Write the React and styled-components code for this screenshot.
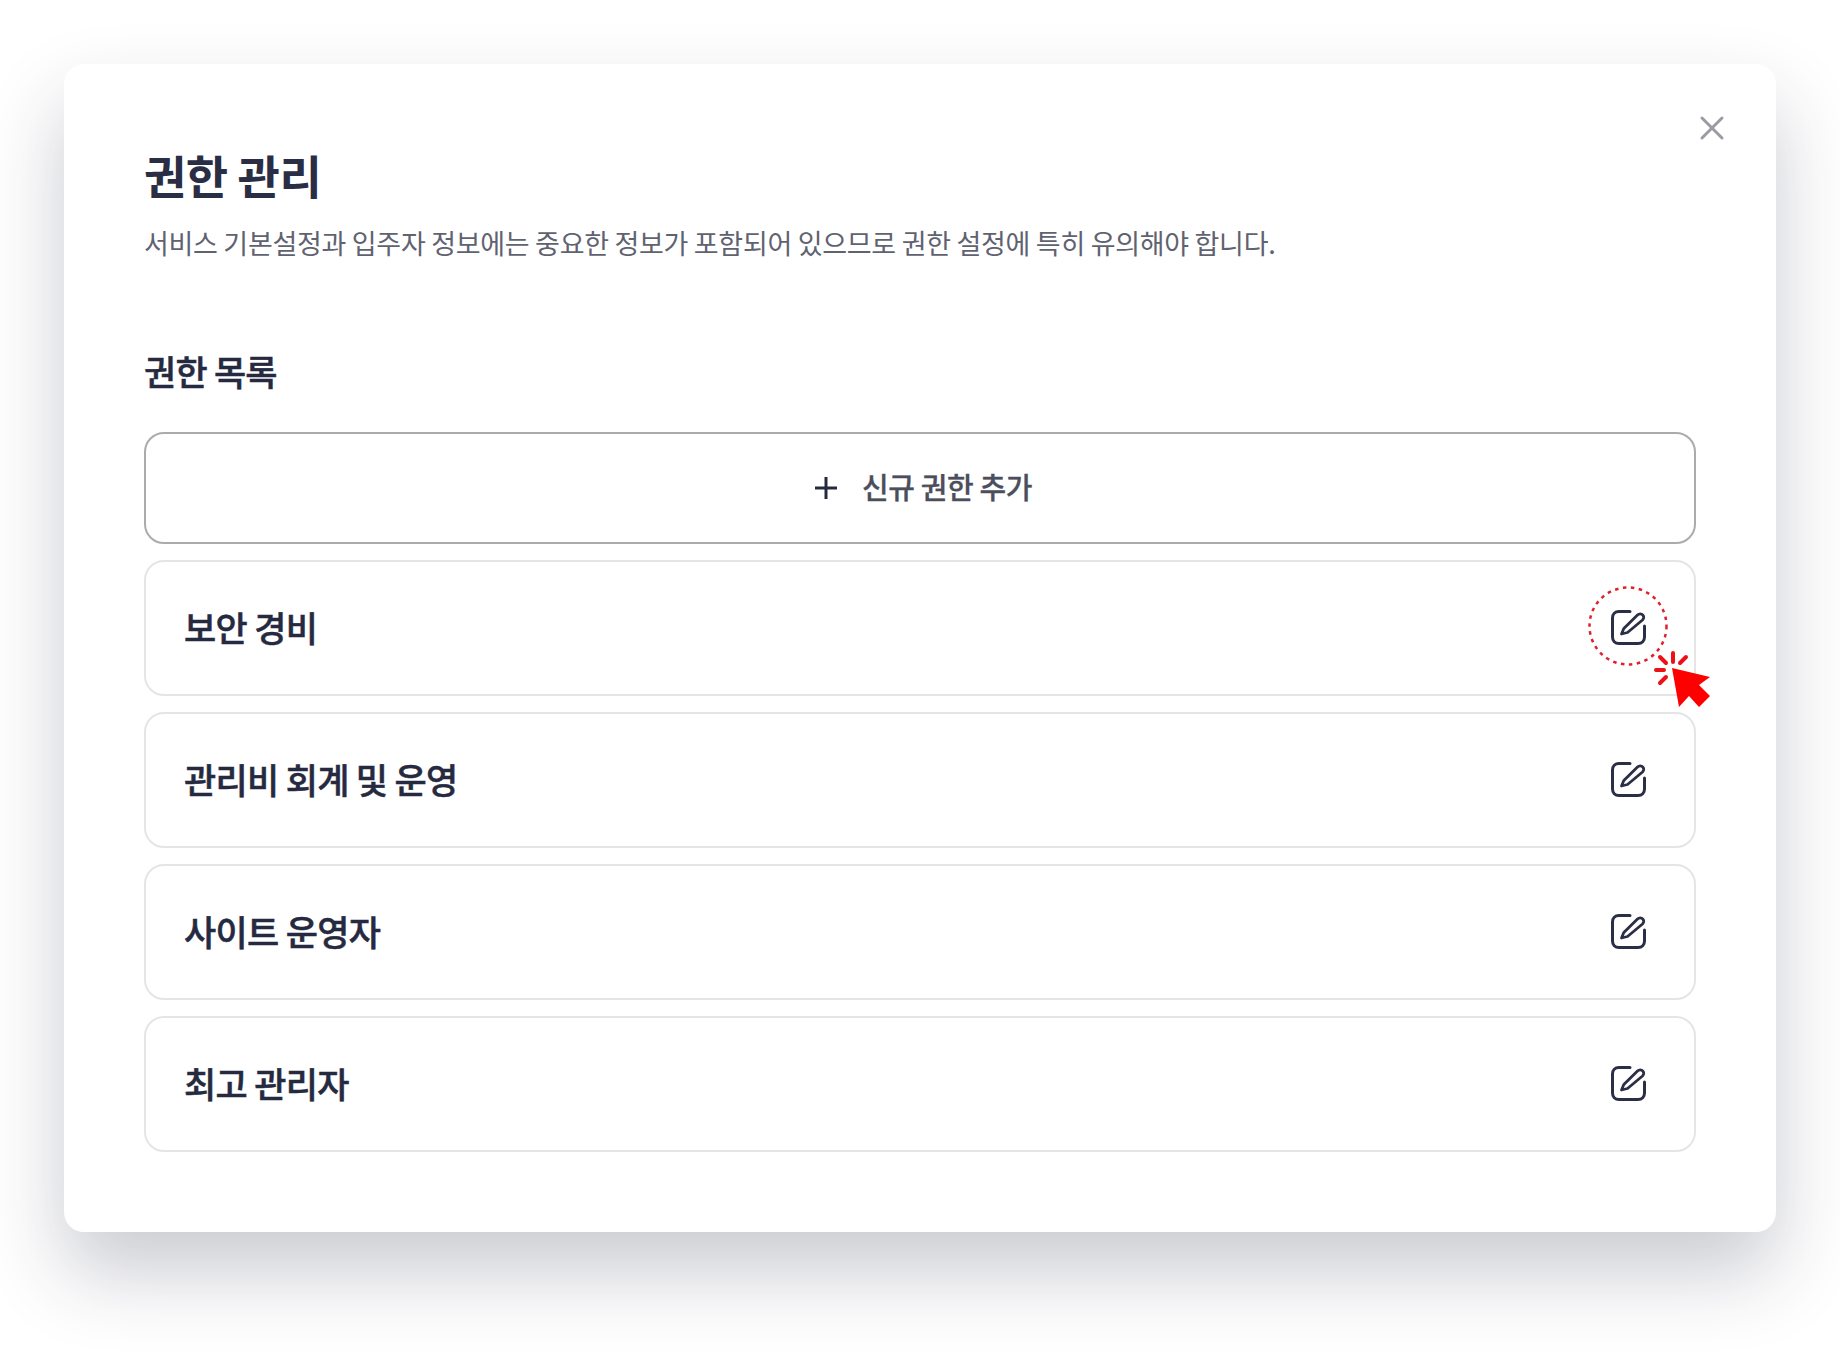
import React from "react";
import styled, { createGlobalStyle } from "styled-components";

const roles = ["보안 경비", "관리비 회계 및 운영", "사이트 운영자", "최고 관리자"];

const GlobalStyle = createGlobalStyle`
  html, body {
    margin: 0;
    padding: 0;
    background: #fff;
    font-family: "Noto Sans CJK KR", "Noto Sans", sans-serif;
  }
  * { box-sizing: border-box; }
`;

const Page = styled.div`
  width: 1840px;
  height: 1368px;
  padding: 64px;
  overflow: hidden;
`;

const Modal = styled.section`
  position: relative;
  width: 1712px;
  height: 1168px;
  padding: 78px 80px 0;
  background: #fff;
  border-radius: 20px;
  box-shadow: 0 40px 80px rgba(35, 38, 62, 0.24);
`;

const CloseButton = styled.button`
  position: absolute;
  top: 48px;
  right: 48px;
  width: 32px;
  height: 32px;
  padding: 0;
  border: 0;
  background: none;
  color: #9a9ca3;
  svg { display: block; }
`;

const Title = styled.h1`
  margin: 0;
  height: 64px;
  font-size: 46px;
  line-height: 64px;
  font-weight: 700;
  letter-spacing: -0.5px;
  color: #2a2e45;
`;

const Description = styled.p`
  margin: 17px 0 0;
  height: 40px;
  font-size: 27px;
  line-height: 40px;
  font-weight: 400;
  letter-spacing: -0.3px;
  color: #5f6270;
`;

const SectionTitle = styled.h2`
  margin: 84px 0 0;
  height: 48px;
  font-size: 35px;
  line-height: 48px;
  font-weight: 500;
  -webkit-text-stroke: 0.5px #262a41;
  letter-spacing: -0.8px;
  color: #262a41;
`;

const List = styled.div`
  display: flex;
  flex-direction: column;
  gap: 16px;
  margin-top: 37px;
`;

const AddButton = styled.button`
  display: flex;
  align-items: center;
  justify-content: center;
  gap: 22px;
  width: 100%;
  height: 112px;
  border: 2px solid #ababab;
  border-radius: 20px;
  background: #fff;
  font-family: inherit;
  font-size: 29px;
  font-weight: 500;
  -webkit-text-stroke: 0.3px #4b4e5c;
  letter-spacing: -0.4px;
  color: #4b4e5c;
  svg { display: block; }
`;

const AddLabel = styled.span`
  margin-bottom: 4px;
`;

const Row = styled.div`
  display: flex;
  align-items: center;
  justify-content: space-between;
  height: 136px;
  padding: 0 46px 0 38px;
  border: 2px solid #e5e5e5;
  border-radius: 20px;
`;

const RowName = styled.span`
  margin-bottom: 4px;
  font-size: 35px;
  font-weight: 500;
  -webkit-text-stroke: 0.5px #262a41;
  letter-spacing: -0.7px;
  color: #262a41;
`;

const EditButton = styled.button`
  position: relative;
  width: 40px;
  height: 40px;
  padding: 0;
  border: 0;
  background: none;
  color: #2b2f45;
  svg { display: block; }
`;

const Highlight = styled.svg`
  position: absolute;
  left: -20px;
  top: -22px;
`;

const Cursor = styled.svg`
  position: absolute;
  left: 41px;
  top: 40px;
  overflow: visible;
`;

const EditIcon = () => (
  <svg width="40" height="40" viewBox="0 0 40 40" fill="none" stroke="currentColor" strokeWidth="3" strokeLinecap="round" strokeLinejoin="round">
    <path d="M22 3.500H11C7 3.500 4.500 6 4.500 10V29C4.500 33 7 35.500 11 35.500H30C34 35.500 36.500 33 36.500 29V18" />
    <path d="M13.500 26 15.800 20.500 29.500 7C31 5.500 33.500 5.500 34.800 7 36.200 8.400 36 10.500 34.500 12L19.500 24.500Z" strokeWidth="2.800" />
  </svg>
);

const ClickCursor = () => (
  <Cursor width="70" height="70" viewBox="0 0 70 70">
    <path fill="#ff0000" d="M23 20 61 29 50 37 61 48 50 59 40 48 30 59Z" />
    <g stroke="#ee1018" strokeWidth="4" strokeLinecap="round">
      <path d="M11 9 17 15" />
      <path d="M24 5V14" />
      <path d="M37 9 31 15" />
      <path d="M7 22H15" />
      <path d="M11 35 17 29" />
    </g>
  </Cursor>
);

export default function App() {
  return (
    <Page>
      <GlobalStyle />
      <Modal>
        <CloseButton aria-label="닫기">
          <svg width="32" height="32" viewBox="0 0 32 32" fill="none" stroke="currentColor" strokeWidth="3" strokeLinecap="round">
            <path d="M6 6 26 26M26 6 6 26" />
          </svg>
        </CloseButton>
        <Title>권한 관리</Title>
        <Description>서비스 기본설정과 입주자 정보에는 중요한 정보가 포함되어 있으므로 권한 설정에 특히 유의해야 합니다.</Description>
        <SectionTitle>권한 목록</SectionTitle>
        <List>
          <AddButton>
            <svg width="32" height="32" viewBox="0 0 32 32" fill="none" stroke="#262a41" strokeWidth="3">
              <path d="M7 16H29M18 5V27" />
            </svg>
            <AddLabel>신규 권한 추가</AddLabel>
          </AddButton>
          {roles.map((role, i) => (
            <Row key={role}>
              <RowName>{role}</RowName>
              <EditButton aria-label={`${role} 편집`}>
                <EditIcon />
                {i === 0 && (
                  <Highlight width="80" height="80" viewBox="0 0 80 80" fill="none" stroke="#e0202c" strokeWidth="2.500" strokeDasharray="3.500 4.500">
                    <circle cx="40" cy="40" r="38.500" />
                  </Highlight>
                )}
                {i === 0 && <ClickCursor />}
              </EditButton>
            </Row>
          ))}
        </List>
      </Modal>
    </Page>
  );
}
